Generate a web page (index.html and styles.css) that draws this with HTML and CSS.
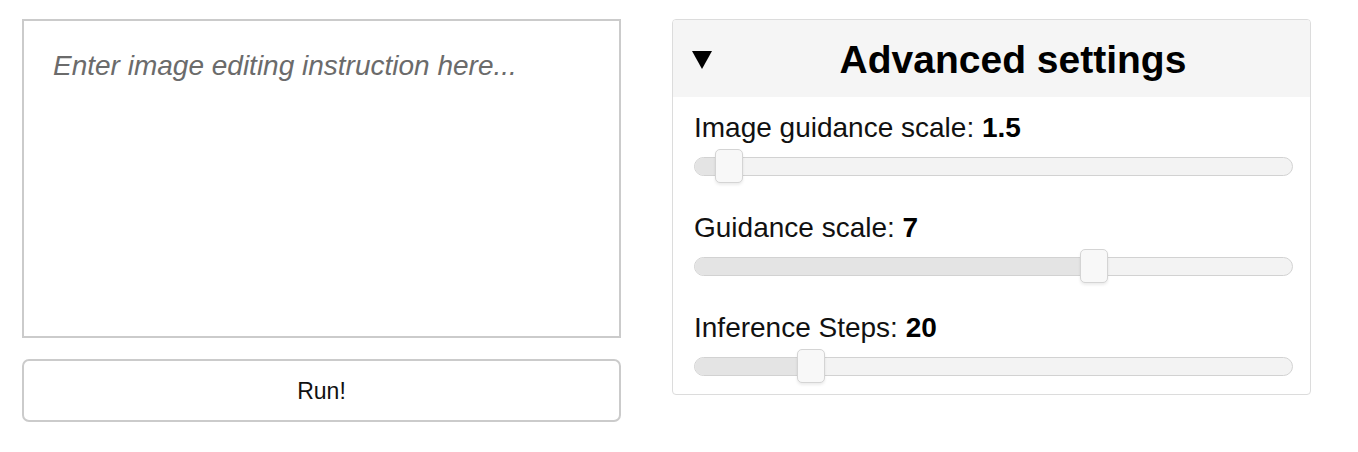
FILE: index.html
```html
<!DOCTYPE html>
<html lang="en">
<head>
<meta charset="utf-8">
<title>Image editing</title>
<link rel="stylesheet" href="styles.css">
</head>
<body>
<main class="layout">
  <section class="left">
    <textarea class="prompt" placeholder="Enter image editing instruction here..."></textarea>
    <button class="run" type="button">Run!</button>
  </section>
  <section class="panel">
    <div class="panel-head">
      <svg class="caret" width="20" height="18" viewBox="0 0 20 18" aria-hidden="true"><polygon points="0,0 20,0 10,18" fill="#000"/></svg>
      <h2 class="panel-title">Advanced settings</h2>
    </div>
    <div class="panel-body">
      <div class="setting">
        <div class="label">Image guidance scale: <b>1.5</b></div>
        <div class="slider">
          <div class="track"><div class="fill" style="width:35px"></div></div>
          <div class="thumb" style="left:21px"></div>
        </div>
      </div>
      <div class="setting">
        <div class="label">Guidance scale: <b>7</b></div>
        <div class="slider">
          <div class="track"><div class="fill" style="width:400px"></div></div>
          <div class="thumb" style="left:386px"></div>
        </div>
      </div>
      <div class="setting">
        <div class="label">Inference Steps: <b>20</b></div>
        <div class="slider">
          <div class="track"><div class="fill" style="width:117px"></div></div>
          <div class="thumb" style="left:103px"></div>
        </div>
      </div>
    </div>
  </section>
</main>
</body>
</html>
```

FILE: styles.css
```css
* { box-sizing: border-box; }
html, body { margin: 0; background: #fff; }
body {
  font-family: "Liberation Sans", Arial, sans-serif;
  color: #111;
}
.layout {
  display: flex;
  align-items: flex-start;
  gap: 51px;
  padding: 19px 22px;
}
.left {
  width: 599px;
  display: flex;
  flex-direction: column;
  gap: 21px;
}
.prompt {
  display: block;
  width: 599px;
  height: 319px;
  margin: 0;
  border: 2px solid #cbcbcb;
  border-radius: 0;
  padding: 29px 29px;
  font-family: "Liberation Sans", Arial, sans-serif;
  font-size: 28px;
  line-height: 32px;
  resize: none;
  outline: none;
  background: #fff;
}
.prompt::placeholder {
  color: #6b6b6b;
  font-style: italic;
  opacity: 1;
}
.run {
  height: 63px;
  width: 599px;
  border: 2px solid #cbcbcb;
  border-radius: 7px;
  background: #fff;
  font-family: "Liberation Sans", Arial, sans-serif;
  font-size: 23px;
  color: #111;
  padding: 2px 0 0;
}
.panel {
  width: 639px;
  border: 1px solid #dcdcdc;
  border-radius: 4px;
  overflow: hidden;
}
.panel-head {
  height: 77px;
  background: #f5f5f5;
  display: flex;
  align-items: center;
  padding-left: 19px;
}
.caret { flex: none; margin-top: 2px; }
.panel-title {
  flex: 1;
  margin: 3px 0 0;
  text-align: center;
  font-size: 39px;
  font-weight: bold;
  color: #000;
  padding-left: 4px;
}
.panel-body {
  padding: 15px 17px 11px 21px;
  display: flex;
  flex-direction: column;
  gap: 29px;
}
.setting {
  display: flex;
  flex-direction: column;
  gap: 5px;
}
.label {
  font-size: 28px;
  line-height: 32px;
  color: #111;
}
.label b { color: #000; }
.slider {
  position: relative;
  width: 599px;
  height: 34px;
  display: flex;
  align-items: center;
}
.track {
  width: 100%;
  height: 19px;
  border: 1px solid #d2d2d2;
  border-radius: 10px;
  background: #f3f3f3;
  overflow: hidden;
}
.fill {
  height: 100%;
  background: #e4e4e4;
}
.thumb {
  position: absolute;
  top: 0;
  width: 28px;
  height: 34px;
  background: #f8f8f8;
  border: 1px solid #d4d4d4;
  border-radius: 5px;
  box-shadow: 0 2px 3px rgba(0,0,0,0.08);
}
```
